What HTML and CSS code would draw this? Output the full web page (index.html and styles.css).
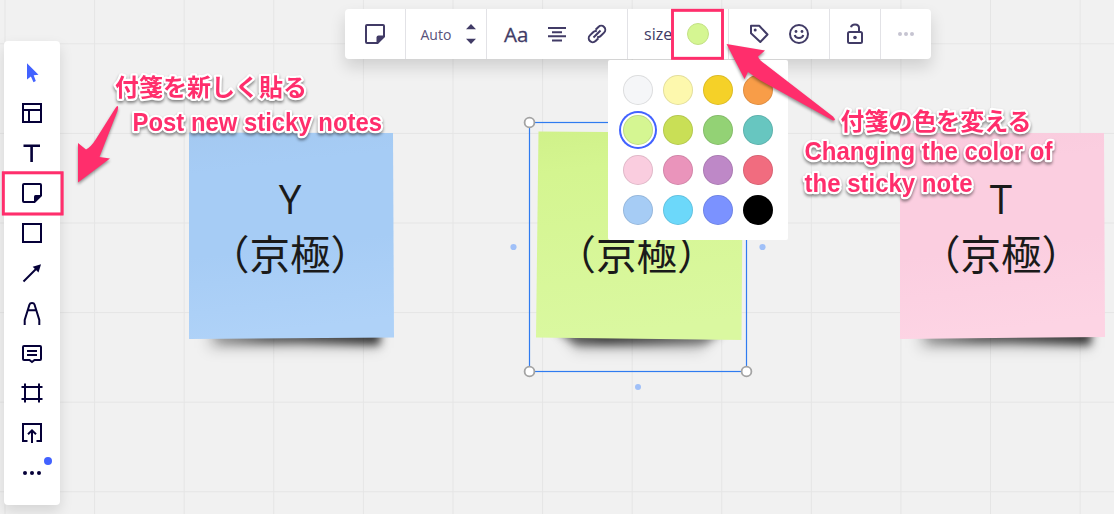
FILE: index.html
```html
<!DOCTYPE html>
<html lang="ja">
<head>
<meta charset="utf-8">
<title>Sticky notes board</title>
<link rel="stylesheet" href="styles.css">
</head>
<body>
<main class="board">
  <article class="note note-blue">
    <svg class="paper" viewBox="0 0 230 250">
      <defs>
        <filter id="soft" x="-20%" y="-60%" width="140%" height="240%"><feGaussianBlur stdDeviation="4"/></filter>
        <filter id="softer" x="-20%" y="-60%" width="140%" height="240%"><feGaussianBlur stdDeviation="7"/></filter>
        <linearGradient id="blue" x1="0" y1="0" x2="0.12" y2="1"><stop offset="0" stop-color="#a4c9f1"/><stop offset="0.2" stop-color="#a6ccf5"/><stop offset="0.6" stop-color="#a6ccf5"/><stop offset="1" stop-color="#afd2f8"/></linearGradient>
        <linearGradient id="green" x1="0" y1="0" x2="0.12" y2="1"><stop offset="0" stop-color="#d0f18a"/><stop offset="0.2" stop-color="#d4f590"/><stop offset="1" stop-color="#daf8a0"/></linearGradient>
        <linearGradient id="pink" x1="0" y1="0" x2="0.12" y2="1"><stop offset="0" stop-color="#f9cbdd"/><stop offset="0.2" stop-color="#fbcee0"/><stop offset="0.6" stop-color="#fbcee0"/><stop offset="1" stop-color="#fdd4e4"/></linearGradient>
        <linearGradient id="shade"><stop offset="0" stop-color="#000" stop-opacity="0.1"/><stop offset="0.35" stop-color="#000" stop-opacity="0.5"/><stop offset="1" stop-color="#000" stop-opacity="0.7"/></linearGradient>
        <linearGradient id="shade-mid"><stop offset="0" stop-color="#000" stop-opacity="0.4"/><stop offset="0.3" stop-color="#000" stop-opacity="0.65"/><stop offset="1" stop-color="#000" stop-opacity="0.35"/></linearGradient>
      </defs>
      <path d="M20 190H190V216H20Z" fill="#000" fill-opacity="0.22" filter="url(#softer)"/>
      <path d="M20 190H191V213L110 211L30 213Z" fill="url(#shade)" filter="url(#soft)"/>
      <path d="M0 .5L204 1L205 205.5L0 207Z" fill="url(#blue)"/>
    </svg>
    <p class="note-text">Y<br>（京極）</p>
  </article>
  <article class="note note-green">
    <svg class="paper" viewBox="0 0 230 250">
      <path d="M20 190H185L165 218H40Z" fill="#000" fill-opacity="0.22" filter="url(#softer)"/>
      <path d="M15 195H195L170 212L110 213L40 213Z" fill="url(#shade-mid)" filter="url(#soft)"/>
      <path d="M2.500 -.5L207 1L205.500 208L0 205.500Z" fill="url(#green)"/>
    </svg>
    <p class="note-text"><br>（京極）</p>
  </article>
  <article class="note note-pink">
    <svg class="paper" viewBox="0 0 230 250">
      <path d="M20 190H190V216H20Z" fill="#000" fill-opacity="0.22" filter="url(#softer)"/>
      <path d="M20 190H191V213L110 211L30 213Z" fill="url(#shade)" filter="url(#soft)"/>
      <path d="M0 1L204 1L205 205L0 207Z" fill="url(#pink)"/>
    </svg>
    <p class="note-text">T<br>（京極）</p>
  </article>

  <svg class="selection" viewBox="0 0 270 280">
    <rect x="24.500" y="12.500" width="217" height="249" fill="none" stroke="#2f7bf0" stroke-width="1.200"/>
    <g fill="#fff" stroke="#a3a3a3" stroke-width="1.800"><circle cx="24.500" cy="12.500" r="4.900"/><circle cx="24.500" cy="261.500" r="4.900"/><circle cx="241.500" cy="261.500" r="4.900"/></g>
    <g fill="#a0c0f8"><circle cx="8.500" cy="137" r="3.100"/><circle cx="257.500" cy="137" r="3.100"/><circle cx="133" cy="277" r="3"/></g>
  </svg>

  <nav class="sidebar">
    <svg class="tool" viewBox="0 0 40 40"><path d="M15 10.300L26.500 21.700L21.700 22.200L23.800 28L21.500 29.200L18.900 23.500L15 26.500Z" fill="#4262ff"/></svg>
    <svg class="tool" viewBox="0 0 40 40"><path d="M11 11H29V29H11ZM11 17H29M17 17V29"/></svg>
    <svg class="tool" viewBox="0 0 40 40"><path d="M11.500 12.800H28M19.600 12.800V29" stroke-width="2.600"/></svg>
    <svg class="tool" viewBox="0 0 40 40"><path d="M12 11H28Q29 11 29 12V22.500L22.500 29H12Q11 29 11 28V12Q11 11 12 11Z"/><path class="solid" d="M22 29.500V23.500Q22 22 23.500 22H29.500L23 29Z"/></svg>
    <svg class="tool" viewBox="0 0 40 40"><path d="M11 11H29V29H11Z"/></svg>
    <svg class="tool" viewBox="0 0 40 40"><path d="M11.500 28.500L25 15"/><path class="solid" d="M29 11.300L26.500 19.500L20.700 13.700Z"/></svg>
    <svg class="tool" viewBox="0 0 40 40"><path d="M12.700 32V27L17.500 11.500Q18 10 20 10Q22 10 22.500 11.500L27.300 27V32M16.500 17.200H23.500"/></svg>
    <svg class="tool" viewBox="0 0 40 40"><path d="M12 13H28Q29 13 29 14V26Q29 27 28 27H22.500L20 29L17.500 27H12Q11 27 11 26V14Q11 13 12 13ZM15 18H25M15 22H25"/></svg>
    <svg class="tool" viewBox="0 0 40 40"><path d="M9.500 14H30.500M9.500 26H30.500M13 10.500V29.500M27 10.500V29.500"/></svg>
    <svg class="tool" viewBox="0 0 40 40"><path d="M15.500 28H11V11H29V28H24.500M20 30V17.500M16 21.300L20 17.300L24 21.300"/></svg>
    <svg class="tool" viewBox="0 0 40 40"><g class="solid"><circle cx="13" cy="20" r="2"/><circle cx="20" cy="20" r="2"/><circle cx="27" cy="20" r="2"/></g><circle cx="36" cy="8" r="4" fill="#4262ff" stroke="none"/></svg>
  </nav>

  <header class="toolbar">
    <div class="group type">
      <svg class="ico" viewBox="0 0 24 24"><path d="M4 3H20Q21 3 21 4V14.500L14.500 21H4Q3 21 3 20V4Q3 3 4 3Z"/><path class="solid" d="M13.500 21.500V15.500Q13.500 13.500 15.500 13.500H21.500L15 21.500Z"/></svg>
    </div>
    <div class="group font-size">
      <span class="auto">Auto</span>
      <svg class="stepper" viewBox="0 0 10 20"><path class="solid" d="M5 0L10 5.300H0ZM5 20L10 14.700H0Z"/></svg>
    </div>
    <div class="group format">
      <span class="aa">Aa</span>
      <svg class="ico align" viewBox="0 0 24 24"><path d="M3 6H21M7 10.300H17M3 14.300H21M7 18.500H17" stroke-width="1.900"/></svg>
      <svg class="ico" viewBox="0 0 24 24"><g transform="rotate(-45 12 12)"><path d="M10 16H6A4 4 0 0 1 6 8H10.500Q13 8 13.800 10M14 8H18A4 4 0 0 1 18 16H13.500Q11 16 10.200 14M7 12H17"/></g></svg>
    </div>
    <div class="group sizing"><span class="size">size</span><span class="current"></span></div>
    <div class="group extras">
      <svg class="ico" viewBox="0 0 24 24"><path d="M4 3.800H12.200L20.500 12.500L13.300 20L4 11.300Z" stroke-linejoin="round"/><circle class="solid" cx="8.200" cy="8" r="1.500"/></svg>
      <svg class="ico" viewBox="0 0 24 24"><circle cx="12" cy="12" r="9"/><path d="M7.700 13Q8.500 16 12 16Q15.500 16 16.300 13"/><circle class="solid" cx="9" cy="9.500" r="1.400"/><circle class="solid" cx="15" cy="9.500" r="1.400"/></svg>
    </div>
    <div class="group lock">
      <svg class="ico" viewBox="0 0 24 24"><rect x="5" y="10" width="14" height="11" rx="1.500"/><path d="M16 10V6Q16 2.500 12 2.500Q8.500 2.500 8 5.200"/><circle class="solid" cx="12" cy="15.500" r="1.800"/></svg>
    </div>
    <div class="group more"><i></i><i></i><i></i></div>
  </header>

  <section class="palette">
    <i class="swatch white"></i><i class="swatch cream"></i><i class="swatch yellow"></i><i class="swatch orange"></i>
    <i class="swatch lime selected"></i><i class="swatch olive"></i><i class="swatch leaf"></i><i class="swatch teal"></i>
    <i class="swatch blush"></i><i class="swatch rose"></i><i class="swatch violet"></i><i class="swatch red"></i>
    <i class="swatch sky"></i><i class="swatch cyan"></i><i class="swatch indigo"></i><i class="swatch black"></i>
  </section>

  <svg class="callouts" viewBox="0 0 1114 514">
    <g class="boxes"><rect x="3.300" y="172.800" width="58.800" height="41.200"/><rect x="672.500" y="10.300" width="50" height="48"/></g>
    <g class="arrows">
      <path d="M118 106Q118.500 108 117.500 111L99.500 157L110 158.500L78 182.500V143L86 149.500Q91 147 96 139L115.500 108Q116.500 106 118 106Z"/>
      <path d="M726.500 44L765 50.500L758 56.500Q759 60 765 64L833 116.500Q835 118.500 835 120Q833 121 831 119.500L760.500 80.500Q755 77 748 72L744.500 79Z"/>
    </g>
    <g class="labels">
      <text class="jp" x="115" y="96" textLength="192">付箋を新しく貼る</text>
      <text x="132.500" y="131" textLength="249.500" lengthAdjust="spacingAndGlyphs">Post new sticky notes</text>
      <text class="jp" x="840.500" y="130" textLength="191">付箋の色を変える</text>
      <text x="804.500" y="160.300" textLength="248" lengthAdjust="spacingAndGlyphs">Changing the color of</text>
      <text x="804.500" y="192" textLength="168" lengthAdjust="spacingAndGlyphs">the sticky note</text>
    </g>
  </svg>
</main>
</body>
</html>
```
FILE: styles.css
```css
* { box-sizing: border-box; }

body { margin: 0; }

.board {
  position: relative;
  width: 1114px;
  height: 514px;
  overflow: hidden;
  background-color: #f1f1f1;
  background-image:
    linear-gradient(90deg, #e5e5e5 1px, transparent 1px),
    linear-gradient(#e5e5e5 1px, transparent 1px);
  background-size: 89.6px 89.6px;
  background-position: 4.500px 43.300px;
  font-family: "Open Sans", "Noto Sans CJK JP", sans-serif;
}

/* Sticky notes placed on the canvas */
.note { position: absolute; top: 132px; width: 205px; height: 206px; }
.note-blue { left: 189px; }
.note-green { left: 535.5px; }
.note-pink { left: 900px; }
.paper { position: absolute; left: 0; top: 0; width: 230px; height: 250px; overflow: visible; }
.note-text {
  position: relative;
  margin: 0 -18px 0 -21px;
  padding-top: 39px;
  font-size: 40.5px;
  font-weight: 400;
  line-height: 56px;
  text-align: center;
  white-space: nowrap;
  color: #1a1a1a;
}

.selection { position: absolute; left: 505px; top: 110px; width: 270px; height: 280px; }

/* Left tool strip */
.sidebar {
  position: absolute;
  left: 4px;
  top: 41px;
  width: 56px;
  padding: 12px 8px;
  display: flex;
  flex-direction: column;
  background: #fff;
  border-radius: 4px;
  box-shadow: 0 6px 14px rgba(0, 0, 0, 0.12);
}
.tool { width: 40px; height: 40px; fill: none; stroke: #050038; stroke-width: 2; }
.tool path[fill] { stroke: none; }
.tool .solid { fill: #050038; stroke: none; }

/* Context toolbar */
.toolbar {
  position: absolute;
  left: 345px;
  top: 9px;
  height: 50px;
  display: flex;
  background: #fff;
  border-radius: 4px;
  color: #413b66;
  box-shadow: 0 8px 16px rgba(0, 0, 0, 0.14);
}
.group { display: flex; align-items: center; justify-content: center; height: 50px; }
.group + .group { border-left: 1px solid #e2e2e6; }
.type { width: 60px; }
.font-size { width: 81px; justify-content: flex-start; padding-left: 14.5px; gap: 14px; }
.format { width: 141px; gap: 16px; padding-right: 1px; }
.sizing { width: 101px; justify-content: flex-start; padding-left: 16px; gap: 15px; }
.extras { width: 101px; gap: 16px; }
.lock { width: 51px; }
.more { width: 51px; gap: 1.800px; }
.more i { width: 4.200px; height: 4.200px; border-radius: 50%; background: #c6c4d1; }
.ico { width: 24px; height: 24px; flex: none; fill: none; stroke: #413b66; stroke-width: 2; }
.solid { fill: #413b66; stroke: none; }
.stepper { width: 10px; height: 20px; }
.auto { font-size: 14px; padding-top: 1px; width: 31px; color: #57527a; }
.aa { font-size: 20.5px; width: 25px; -webkit-text-stroke: 0.3px #413b66; }
.size { font-size: 16px; width: 28px; }
.current { width: 22px; height: 22px; border-radius: 50%; background: #d5f692; border: 1px solid #c3e185; }

/* Colour picker */
.palette {
  position: absolute;
  left: 608px;
  top: 60px;
  width: 180px;
  height: 180px;
  padding: 15px;
  display: grid;
  grid-template-columns: repeat(4, 30px);
  grid-auto-rows: 30px;
  gap: 10px;
  background: #fff;
  border-radius: 2px;
}
.swatch { border-radius: 50%; border: 1px solid rgba(0, 0, 0, 0.1); }
.selected { box-shadow: 0 0 0 2px #fff, 0 0 0 4px #4262ff; }
.white { background: #f5f6f8; }
.cream { background: #fdf8ad; }
.yellow { background: #f5d128; }
.orange { background: #f89d48; }
.lime { background: #d5f692; }
.olive { background: #c9df56; }
.leaf { background: #93d275; }
.teal { background: #67c6c0; }
.blush { background: #facddf; }
.rose { background: #ea94bb; }
.violet { background: #be88c7; }
.red { background: #f16c7f; }
.sky { background: #a6ccf5; }
.cyan { background: #6cd8fa; }
.indigo { background: #7b92ff; }
.black { background: #000; }

/* Pink explanatory marks over the board */
.callouts { position: absolute; left: 0; top: 0; width: 1114px; height: 514px; }
.boxes { fill: none; stroke: #ff2e6c; stroke-width: 2.8; filter: drop-shadow(0 0 0.5px rgba(255, 46, 108, 0.6)); }
.arrows { fill: #ff2e6c; filter: drop-shadow(0 2px 1.5px rgba(0, 0, 0, 0.4)); }
.labels {
  fill: #ff2e6c;
  stroke: #fff;
  stroke-width: 4.5px;
  stroke-linejoin: round;
  paint-order: stroke;
  font-family: "Liberation Sans", "Noto Sans CJK JP", sans-serif;
  font-size: 25px;
  font-weight: 700;
  filter: drop-shadow(0 2px 1.5px rgba(0, 0, 0, 0.45));
}
.labels .jp { font-family: "Noto Sans CJK JP", sans-serif; font-size: 24px; }
```
